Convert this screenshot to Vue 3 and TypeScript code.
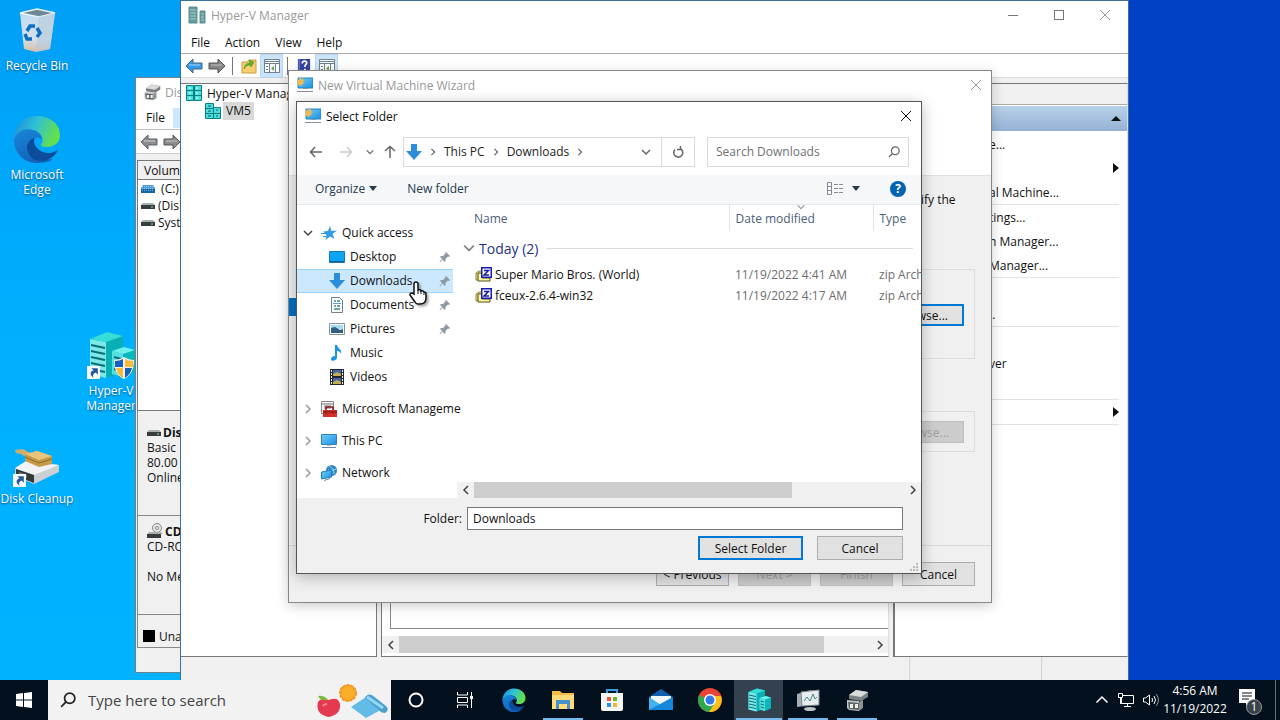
<script setup lang="ts">
import { ref } from 'vue'

interface TreeItem {
  label: string
  icon: string
  level: number
  chevron?: 'open' | 'closed'
  pinned?: boolean
  spaced?: boolean
}

const tree: TreeItem[] = [
  { label: 'Quick access', icon: 'star', level: 0, chevron: 'open' },
  { label: 'Desktop', icon: 'desktop', level: 1, pinned: true },
  { label: 'Downloads', icon: 'download', level: 1, pinned: true },
  { label: 'Documents', icon: 'document', level: 1, pinned: true },
  { label: 'Pictures', icon: 'picture', level: 1, pinned: true },
  { label: 'Music', icon: 'music', level: 1 },
  { label: 'Videos', icon: 'video', level: 1 },
  { label: 'Microsoft Manageme', icon: 'toolbox', level: 0, chevron: 'closed', spaced: true },
  { label: 'This PC', icon: 'pc', level: 0, chevron: 'closed', spaced: true },
  { label: 'Network', icon: 'network', level: 0, chevron: 'closed', spaced: true },
]

const files = [
  { name: 'Super Mario Bros. (World)', date: '11/19/2022 4:41 AM', type: 'zip Arch' },
  { name: 'fceux-2.6.4-win32', date: '11/19/2022 4:17 AM', type: 'zip Arch' },
]

const actions = [
  { label: 'e...', arrow: false, line: false },
  { label: '', arrow: true, line: false },
  { label: 'al Machine...', arrow: false, line: true },
  { label: 'tings...', arrow: false, line: false },
  { label: 'h Manager...', arrow: false, line: false },
  { label: 'Manager...', arrow: false, line: true },
  { label: '', arrow: false, line: false },
  { label: '..', arrow: false, line: true },
  { label: '', arrow: false, line: false },
  { label: 'ver', arrow: false, line: false },
  { label: '', arrow: false, line: true },
  { label: '', arrow: true, line: true },
]

const shortcuts = [
  { name: 'recycle', icon: 'recycle', lines: ['Recycle Bin'], link: false },
  { name: 'edge', icon: 'edge', lines: ['Microsoft', 'Edge'], link: false },
  { name: 'hyperv', icon: 'server-big', lines: ['Hyper-V', 'Manager'], link: true },
  { name: 'cleanup', icon: 'cleanup', lines: ['Disk Cleanup'], link: true },
]

const apps = [
  { icon: 'cortana', name: 'Cortana', state: '' },
  { icon: 'taskview', name: 'Task View', state: '' },
  { icon: 'edge', name: 'Microsoft Edge', state: '' },
  { icon: 'explorer', name: 'File Explorer', state: 'running' },
  { icon: 'store', name: 'Microsoft Store', state: '' },
  { icon: 'mail', name: 'Mail', state: '' },
  { icon: 'chrome', name: 'Google Chrome', state: '' },
  { icon: 'server-big', name: 'Hyper-V Manager', state: 'running active' },
  { icon: 'monitor', name: 'Performance Monitor', state: 'running' },
  { icon: 'diskapp', name: 'Disk Management', state: 'running' },
]

const selected = ref('Downloads')
const folder = ref('Downloads')
const query = ref('')
const search = ref('')
</script>

<template>
  <div class="screen">
    <svg class="defs" aria-hidden="true">
      <defs>
        <linearGradient id="g-edge" x1="0" y1="0" x2="1" y2="0.3">
          <stop offset="0" stop-color="#1789d8" /><stop offset=".5" stop-color="#2fc0d8" /><stop offset="1" stop-color="#62e04c" />
        </linearGradient>
        <linearGradient id="g-blue" x1="0" y1="0" x2="0.4" y2="1">
          <stop offset="0" stop-color="#1a86da" /><stop offset="1" stop-color="#1164b8" />
        </linearGradient>
        <linearGradient id="g-bin" x1="0" y1="0" x2="0" y2="1">
          <stop offset="0" stop-color="#bcdcf2" /><stop offset=".7" stop-color="#d5e0ea" /><stop offset="1" stop-color="#d8bda5" />
        </linearGradient>
        <linearGradient id="g-screen" x1="0" y1="0" x2="1" y2="1">
          <stop offset="0" stop-color="#6fd0fa" /><stop offset="1" stop-color="#1a8fdf" />
        </linearGradient>
        <symbol id="recycle" viewBox="0 0 48 48">
          <path d="M7 7l17-4 18 4-5 36-14 3-12-3z" fill="url(#g-bin)" />
          <path d="M7 7l17-4 18 4-16 4z" fill="#6c8798" stroke="#e7f2f8" stroke-width="1.5" />
          <path d="M26 11l16-4-5 36-14 3z" fill="#b6cadb" opacity=".6" />
          <path d="M14 25l3-5h5M24 22l3 5-3 4M19 33h-5l-2-5" fill="none" stroke="#0c6fc4" stroke-width="3.5" />
        </symbol>
        <symbol id="edge" viewBox="0 0 48 48">
          <path d="M1 25C1 10 11 1 24 1c14 0 23 9 23 19 0 8-6 12-13 12-5 0-7-1-6-3 2-2 2-4 1-7-3-9-18-11-28 3z" fill="url(#g-edge)" />
          <path d="M1 25C4 15 13 13 20 15c6 2 9 6 9 10-1-2-4-3-7-2-6 3-5 12 1 17 5 4 11 5 17 4-4 3-10 4-16 4C11 48 1 38 1 25z" fill="url(#g-blue)" />
          <path d="M22 23c-9 2-11 12-3 20 7 6 19 3 25-6 1-1 0-2-1-1-5 3-13 3-18-2-4-4-5-8-3-11z" fill="#0b4c9b" />
        </symbol>
        <symbol id="server-big" viewBox="0 0 48 48">
          <path d="M3 8l17-7 16 4v36l-17 6-16-4z" fill="#08b0b5" />
          <path d="M3 8l16 3v36L3 43z" fill="#7ce9e8" />
          <path d="M3 8l17-7 16 4-17 6z" fill="#35ded9" />
          <path d="M4 14l14 3M4 20l14 3M4 26l14 3M4 32l14 3M4 38l14 3" stroke="#0a6d78" stroke-width="2" />
          <path d="M25 20l12-4 11 3v22l-12 5-11-3z" fill="#0ab7bb" />
          <path d="M25 20l11 3v23l-11-3z" fill="#57dedf" />
          <path d="M25 20l12-4 11 3-12 4z" fill="#6bf0eb" />
          <path d="M27 26l7 2M27 32l7 2M27 38l7 2" stroke="#0a6d78" stroke-width="2" />
        </symbol>
        <symbol id="shield" viewBox="0 0 20 22">
          <path d="M10 0c3 2 7 3 10 3 0 9-3 16-10 19C3 19 0 12 0 3c3 0 7-1 10-3z" fill="#f2f2e8" />
          <path d="M9 2v8H1c0-2 0-4 0-6 3 0 6-1 8-2zM11 11h7c-1 4-3 7-7 10z" fill="#1560bd" />
          <path d="M11 2c2 1 5 2 8 2v6h-8zM2 11h7v10c-4-2-6-6-7-10z" fill="#f8b83c" />
        </symbol>
        <symbol id="cleanup" viewBox="0 -6 48 48">
          <path d="M2 24l11-7 33 3v7l-25 12-19-8z" fill="#c9cfd3" />
          <path d="M2 23l11-7 33 4-25 10z" fill="#f1f3f4" />
          <path d="M3 24l18 6v8L3 31z" fill="#34393c" />
          <path d="M6 27l8 3v3l-8-3z" fill="#6f767a" />
          <path d="M2 5l8-1 7 4-4 4-5-3-5-1z" fill="#cfae6c" />
          <path d="M12 9l12-3 15 5v8l-13 3-14-6z" fill="#c79a48" />
          <path d="M12 9l12-3 15 5-13 4z" fill="#e6c67c" />
          <path d="M12 12l14 6 13-4" stroke="#8d6b2d" fill="none" />
        </symbol>
        <symbol id="shortcut" viewBox="0 0 12 12">
          <path d="M0 0h12v12H0z" fill="#f7fbff" />
          <path d="M4 2h6v6L8 6c-2 1-3 2-2 5-4-3-3-6 0-7z" fill="#2b579a" />
        </symbol>
        <symbol id="servers" viewBox="0 0 18 18">
          <path d="M1 1h8v16H1z" fill="#639b9c" stroke="#5c8d90" />
          <path d="M12 5h5v12h-5z" fill="#639b9c" stroke="#5c8d90" />
          <path d="M2 4h6M2 7h6M2 10h6M2 13h6M13 8h3M13 11h3M13 14h3" stroke="#a9cccb" />
        </symbol>
        <symbol id="root" viewBox="0 0 16 16">
          <path d="M.5.500h7v15h-7zM8.500.500h7v15h-7z" fill="#4cdedb" stroke="#087f87" />
          <path d="M1 5.500h14M1 10.500h14" stroke="#087f87" />
          <path d="M3 3h2M10 3h2M3 8h2M10 8h2M3 13h2M10 13h2" stroke="#eaffff" />
        </symbol>
        <symbol id="vm" viewBox="0 0 16 16">
          <path d="M.5.500h8v15h-8zM8.500 4.500h7v11h-7z" fill="#4cdedb" stroke="#087f87" />
          <path d="M1 5.500h8M1 10.500h14" stroke="#087f87" />
          <path d="M3 3h3M3 8h3M3 13h3M11 7h2M11 13h2" stroke="#075f69" />
        </symbol>
        <symbol id="wizard" viewBox="0 0 16 16">
          <path d="M1 1h15v10H1z" fill="url(#g-screen)" stroke="#2384bd" />
          <path d="M3 0l1 2 2-1v2l2 1-2 1 1 2-2 0-1 2-2-1-2 0 1-3-1-2 2 0z" fill="#edb950" />
          <path d="M0 14.500h16" stroke="#85919a" /><path d="M6 11h5v1H6z" fill="#7f99a8" />
        </symbol>
        <symbol id="pc" viewBox="0 0 16 16">
          <path d="M.5 1.500h15v10H.5z" fill="url(#g-screen)" stroke="#2d84b7" />
          <path d="M1 14.500h14M6 12h4" stroke="#6a8797" />
        </symbol>
        <symbol id="star" viewBox="0 0 16 16">
          <path d="M9 1l1.500 5 5.500-.5-4.500 3.500 2 5-4.500-2.500L4.500 15l1-5L2 6.500l5-.5z" fill="#339be6" />
          <path d="M0 8.500h5M2 11.500h3" stroke="#339be6" />
        </symbol>
        <symbol id="desktop" viewBox="0 0 16 16"><path d="M.5 2.500h15v11H.5z" fill="#0ba5f3" stroke="#1478b8" /><path d="M1 12.500h14" stroke="#075d96" /></symbol>
        <symbol id="download" viewBox="0 0 16 16"><path d="M5 0h6v7h5l-8 9-8-9h5z" fill="#2c8ed8" /></symbol>
        <symbol id="document" viewBox="0 0 16 16">
          <path d="M2.500.5h8l3 3v12h-11z" fill="#fbfdff" stroke="#71828d" />
          <path d="M5 4h2M8 4h3M5 9h2M8 9h3M5 12h6" stroke="#3c8a85" stroke-width="1.500" /><path d="M4 6.500h8" stroke="#5aa2d0" />
        </symbol>
        <symbol id="picture" viewBox="0 0 16 16">
          <path d="M.5 2.500h15v11H.5z" fill="#fff" stroke="#83929e" /><path d="M2 4h12v4H2z" fill="#a6d8f2" /><path d="M2 7l4-1 5 3 3-1v4H2z" fill="#315e83" />
        </symbol>
        <symbol id="music" viewBox="0 0 16 16"><path d="M6 0h2c1 4 5 4 4 9-1-3-3-3-4-3v7c-1 3-6 4-6 1 0-2 2-3 4-3z" fill="#1696e8" /></symbol>
        <symbol id="video" viewBox="0 0 16 16">
          <path d="M1 0h14v16H1z" fill="#22262d" /><path d="M4 1h8v6H4zM4 9h8v6H4z" fill="#4566a5" /><path d="M4 5l4-2 4 2v2H4zM4 13l4-2 4 2v2H4z" fill="#c1ae50" />
          <path d="M2.500 1v14M13.500 1v14" stroke="#f5f5f5" stroke-dasharray="2 1" />
        </symbol>
        <symbol id="toolbox" viewBox="0 0 16 16">
          <path d="M.5.5h12v12H.5z" fill="#f8f8f8" stroke="#85888d" /><path d="M1 3h11M3 5h7M3 7h7" stroke="#74777c" />
          <path d="M5 9V6h7v3" fill="none" stroke="#7e1618" stroke-width="1.500" /><path d="M2 9h14v7H2z" fill="#d03028" /><path d="M2 11h14M5 10v3M12 10v3" stroke="#7b1715" />
        </symbol>
        <symbol id="network" viewBox="0 0 16 16">
          <circle cx="10.500" cy="5.500" r="5.500" fill="#2d86bd" /><path d="M8 1c4 2 5 5 5 8M7 5c3 1 6 0 8-1" stroke="#a2e0fb" fill="none" />
          <path d="M.5 7l10-2v7l-10 2z" fill="url(#g-screen)" stroke="#247eb1" /><path d="M3 15.500l6-2" stroke="#69889a" />
        </symbol>
        <symbol id="pin" viewBox="0 0 12 12"><path d="M7 1l4 4-1 1-1-.5-2.500 2.500v2L5.500 11 3.500 8.500 1 11.500.5 11 3 8 1 6l1-1h2L6.500 2.500 6 2z" fill="#8f9aa4" /></symbol>
        <symbol id="zip" viewBox="0 0 17 16">
          <path d="M1 13V6l3-2h3v9z" fill="#e9e478" stroke="#8a8640" /><path d="M3 14V6h4v5h8v3z" fill="#fbf7a0" stroke="#55511f" />
          <path d="M6.750.750h9.500v9.500h-9.500z" fill="#fff" stroke="#171bb0" stroke-width="1.500" /><path d="M9 3.500h4.500L9 8h5" fill="none" stroke="#171b9c" stroke-width="1.500" />
        </symbol>
        <symbol id="arrow-l" viewBox="0 0 18 16"><path d="M1 8l7-7v4h9v6H8v4z" fill="currentColor" stroke="#52636f" /><path d="M4 7h11" stroke="#fff" opacity=".3" stroke-width="2" /></symbol>
        <symbol id="arrow-r" viewBox="0 0 18 16"><path d="M17 8l-7-7v4H1v6h9v4z" fill="currentColor" stroke="#555" /><path d="M3 7h11" stroke="#fff" opacity=".25" stroke-width="2" /></symbol>
        <symbol id="folder-up" viewBox="0 0 16 16"><path d="M1 4h5l2-2h7v13H1z" fill="#f6ce70" stroke="#cf9c3d" /><path d="M3 11c1-5 3-6 6-6l-1-3 5 2-3 5-1-2c-3 0-4 1-6 4z" fill="#60b332" stroke="#3a8920" stroke-width=".5" /></symbol>
        <symbol id="panel" viewBox="0 0 16 16">
          <path d="M.5 1.500h15v13H.5z" fill="#f8fbfd" stroke="#71808c" /><path d="M1 3.500h14M1 5.500h14" stroke="#71808c" /><path d="M5.500 6v9M11.500 6v9M2 8.500h2M2 11.500h2" stroke="#71808c" /><path d="M10 8v5l-3-2.500z" fill="#61a73a" />
        </symbol>
        <symbol id="help-doc" viewBox="0 0 14 16"><path d="M0 0h14v16H0z" fill="#3346a4" /><path d="M1.500 0v16" stroke="#8592cf" /><path d="M5 5c0-4 6-3 5 0-1 2-2 1-2 4M8 11v2" fill="none" stroke="#fff" stroke-width="2" /></symbol>
        <symbol id="drive" viewBox="0 0 14 6"><path d="M2 0h10l2 2v4H0V2z" fill="#a7afae" /><path d="M0 2h14v4H0z" fill="#363d3f" /><path d="M10 4h2" stroke="#9be3ad" /></symbol>
        <symbol id="drive-blue" viewBox="0 0 14 8"><path d="M2 0h10l2 3v5H0V3z" fill="#4b9bd8" /><path d="M0 4h14v4H0z" fill="#1265a7" /><path d="M1 1.500h12M1 3.500h12M1 5.500h12" stroke="#fff" stroke-dasharray="1 1" opacity=".45" /></symbol>
        <symbol id="cd" viewBox="0 0 16 16"><circle cx="10" cy="5" r="4.500" fill="#e4e4e4" stroke="#8b8b8b" /><circle cx="10" cy="5" r="1.500" fill="#fff" stroke="#888" /><path d="M2 9h12l2 2H0z" fill="#a7afae" /><path d="M0 11h14v4H0z" fill="#363d3f" /></symbol>
        <symbol id="diskapp" viewBox="0 0 24 24">
          <path d="M4 7l7-5 12 2v5l-7 4-12-2z" fill="#7b8082" /><path d="M4 7l7-5 12 2-7 5z" fill="#d9dcdd" />
          <path d="M2 12l12 1v10l-10-1-2-2z" fill="#bfc3c4" /><path d="M3 14l11 1v7l-10-1z" fill="#5d6264" /><path d="M5 16h3v4H5zM10 16h3v4h-3z" fill="#f1f1f1" /><path d="M14 14l4-2v8l-4 3z" fill="#8d9294" />
        </symbol>
        <symbol id="cortana" viewBox="0 0 24 24"><circle cx="12" cy="12" r="6.500" fill="none" stroke="#fff" stroke-width="2" /></symbol>
        <symbol id="taskview" viewBox="0 0 24 24"><path d="M4.500 4v3h10V4M4.500 20v-3h10v3M4.500 9.500h10v5h-10zM18.500 4v16" fill="none" stroke="#fff" /><path d="M17 8h3v3h-3z" fill="#fff" /></symbol>
        <symbol id="explorer" viewBox="0 0 24 24"><path d="M1 3h8l2 2h12v16H1z" fill="#f4bd45" /><path d="M1 7h22v14H1z" fill="#ffdc78" /><path d="M5 12h14v9h-3v-5H8v5H5z" fill="#4493cf" /></symbol>
        <symbol id="store" viewBox="0 0 24 24"><path d="M7 6V2h10v4" fill="none" stroke="#38a1dd" stroke-width="2" /><path d="M1 5h22v16q0 2-2 2H3q-2 0-2-2z" fill="#f5f7f8" /><path d="M7 9h4v4H7z" fill="#f05434" /><path d="M13 9h4v4h-4z" fill="#75b42c" /><path d="M7 15h4v4H7z" fill="#2694dd" /><path d="M13 15h4v4h-4z" fill="#f5b52b" /></symbol>
        <symbol id="mail" viewBox="0 0 24 24"><path d="M0 9l12-8 12 8v13H0z" fill="#1060b1" /><path d="M2 8h20v8H2z" fill="#eef7fc" /><path d="M0 9l12 8-12 5z" fill="#41b2ee" /><path d="M24 9v13H0z" fill="#1688dc" /></symbol>
        <symbol id="chrome" viewBox="0 0 24 24"><circle cx="12" cy="12" r="12" fill="#eb4335" /><path d="M1 7c-3 9 2 16 10 17l6-9-5-3z" fill="#2fa94f" /><path d="M11 24c8 1 15-8 12-16H12l5 7z" fill="#fbc116" /><circle cx="12" cy="12" r="6" fill="#fff" /><circle cx="12" cy="12" r="4.500" fill="#3479e8" /></symbol>
        <symbol id="monitor" viewBox="0 0 24 24"><path d="M1 6l14-4v15L1 19z" fill="#a7adb0" /><path d="M5 4l18-2v15L6 18z" fill="#e7ecec" stroke="#7d898d" /><path d="M8 13l3-4 3 4 3-7 2 5 2-2" fill="none" stroke="#4d8588" /><ellipse cx="14" cy="21" rx="6" ry="2" fill="#bfc4c5" /></symbol>
        <symbol id="close" viewBox="0 0 12 12"><path d="M1 1l10 10M11 1L1 11" fill="none" stroke="currentColor" /></symbol>
        <symbol id="chev" viewBox="0 0 10 10"><path d="M1 3l4 4 4-4" fill="none" stroke="currentColor" stroke-width="1.500" /></symbol>
        <symbol id="chev-r" viewBox="0 0 10 10"><path d="M3 1l4 4-4 4" fill="none" stroke="currentColor" stroke-width="1.500" /></symbol>
        <symbol id="chev-l" viewBox="0 0 10 10"><path d="M7 1L3 5l4 4" fill="none" stroke="currentColor" stroke-width="1.500" /></symbol>
        <symbol id="back" viewBox="0 0 14 12"><path d="M13 6H2M6 1L1.500 6 6 11" fill="none" stroke="currentColor" stroke-width="1.500" /></symbol>
        <symbol id="lens" viewBox="0 0 14 14"><circle cx="8.500" cy="5.500" r="4.500" fill="none" stroke="currentColor" stroke-width="1.500" /><path d="M5.500 8.500L1 13" stroke="currentColor" stroke-width="1.500" /></symbol>
      </defs>
    </svg>

    <main class="desktop">
      <a v-for="s in shortcuts" :key="s.name" href="#" class="shortcut" :class="s.name">
        <span class="pic">
          <svg class="big"><use :href="'#' + s.icon" /></svg>
          <svg v-if="s.link" class="link"><use href="#shortcut" /></svg>
          <svg v-if="s.name === 'hyperv'" class="shield"><use href="#shield" /></svg>
        </span>
        <span v-for="l in s.lines" :key="l">{{ l }}</span>
      </a>

      <section class="win disk">
        <header class="disk-title"><svg class="i18"><use href="#diskapp" /></svg>Disk</header>
        <nav class="disk-menu"><button>File</button><span class="hot"></span></nav>
        <div class="disk-tools"><svg class="i18"><use href="#arrow-l" /></svg><svg class="i18"><use href="#arrow-r" /></svg></div>
        <div class="volumes">
          <div class="vol-head">Volume</div>
          <div class="vol"><svg class="tall"><use href="#drive-blue" /></svg><span>&nbsp;(C:)</span></div>
          <div class="vol"><svg><use href="#drive" /></svg><span>(Disk</span></div>
          <div class="vol"><svg><use href="#drive" /></svg><span>System</span></div>
        </div>
        <div class="unit first">
          <strong><svg class="drv"><use href="#drive" /></svg>Disk</strong>
          <span>Basic</span><span>80.00 G</span><span>Online</span>
        </div>
        <div class="unit second">
          <strong><svg class="i16"><use href="#cd" /></svg>CD-</strong>
          <span>CD-ROM</span><span>&nbsp;</span><span>No Media</span>
        </div>
        <div class="legend"><i></i>Unallocated</div>
      </section>

      <section class="win hyper">
        <header class="title dim"><svg class="i18"><use href="#servers" /></svg><span class="grow">Hyper-V Manager</span>
          <button class="cap" aria-label="Minimize"><i class="min"></i></button>
          <button class="cap" aria-label="Maximize"><i class="max"></i></button>
          <button class="cap" aria-label="Close"><svg class="i12"><use href="#close" /></svg></button>
        </header>
        <nav class="menu"><button>File</button><button>Action</button><button>View</button><button>Help</button></nav>
        <div class="tools">
          <button class="tool blue" aria-label="Back"><svg class="i18"><use href="#arrow-l" /></svg></button>
          <button class="tool" aria-label="Forward"><svg class="i18"><use href="#arrow-r" /></svg></button>
          <i class="sep"></i>
          <button class="tool" aria-label="Up"><svg class="i16"><use href="#folder-up" /></svg></button>
          <button class="tool on" aria-label="Console tree"><svg class="i16"><use href="#panel" /></svg></button>
          <i class="sep"></i>
          <button class="tool" aria-label="Help"><svg class="i14"><use href="#help-doc" /></svg></button>
          <button class="tool on" aria-label="Action pane"><svg class="i16"><use href="#panel" /></svg></button>
        </div>
        <div class="panes">
          <div class="pane left">
            <div class="node"><svg class="i16"><use href="#root" /></svg>Hyper-V Manager</div>
            <div class="node child"><svg class="i16"><use href="#vm" /></svg><span class="chosen">VM5</span></div>
          </div>
          <div class="pane center">
            <div class="sheet"></div>
            <div class="scroll">
              <button aria-label="Scroll left"><svg class="i10"><use href="#chev-l" /></svg></button>
              <span class="track"><i class="thumb wide"></i></span>
              <button aria-label="Scroll right"><svg class="i10"><use href="#chev-r" /></svg></button>
            </div>
          </div>
          <div class="pane right">
            <div class="pane-head"></div>
            <div class="pane-group"><i class="tri-up"></i></div>
            <button v-for="(a, i) in actions" :key="i" class="action" :class="{ line: a.line }">
              <span>{{ a.label }}</span><i v-if="a.arrow" class="tri-right"></i>
            </button>
          </div>
        </div>
        <footer class="status"><span class="grow"></span><span class="cell"></span><span class="cell small"></span></footer>
      </section>

      <section class="win wizard">
        <header class="title dim"><svg class="i16"><use href="#wizard" /></svg><span class="grow">New Virtual Machine Wizard</span>
          <button class="cap slim" aria-label="Close"><svg class="i12"><use href="#close" /></svg></button>
        </header>
        <div class="banner"></div>
        <div class="wiz-body">
          <i class="step"></i>
          <p class="hint">ify the</p>
          <div class="group one"><button class="btn focus">wse...</button></div>
          <div class="group two"><button class="btn off" disabled>wse...</button></div>
        </div>
        <footer class="wiz-foot">
          <button class="btn">&lt; Previous</button>
          <button class="btn off" disabled>Next &gt;</button>
          <button class="btn off" disabled>Finish</button>
          <button class="btn">Cancel</button>
        </footer>
      </section>

      <section class="win dialog">
        <header class="title"><svg class="i16"><use href="#wizard" /></svg><span class="grow">Select Folder</span>
          <button class="cap slim" aria-label="Close"><svg class="i12"><use href="#close" /></svg></button>
        </header>
        <div class="nav">
          <button class="go" aria-label="Back"><svg class="i14"><use href="#back" /></svg></button>
          <button class="go faint" aria-label="Forward"><svg class="i14 flip"><use href="#back" /></svg></button>
          <button class="go tiny" aria-label="Recent"><svg class="i8"><use href="#chev" /></svg></button>
          <button class="go" aria-label="Up"><svg class="i14 up"><use href="#back" /></svg></button>
          <div class="address">
            <svg class="i16"><use href="#download" /></svg>
            <svg class="i8"><use href="#chev-r" /></svg><a href="#">This PC</a>
            <svg class="i8"><use href="#chev-r" /></svg><a href="#">Downloads</a>
            <svg class="i8"><use href="#chev-r" /></svg>
            <span class="grow"></span>
            <button class="drop" aria-label="Previous locations"><svg class="i10"><use href="#chev" /></svg></button>
            <button class="reload" aria-label="Refresh">
              <svg class="i12" viewBox="0 0 12 12"><path d="M8 2.500A4.500 4.500 0 1 1 3 3.500M8.500 0v3.500H5" fill="none" stroke="#666" stroke-width="1.500" /></svg>
            </button>
          </div>
          <div class="find"><input v-model="query" type="text" aria-label="Search Downloads" placeholder="Search Downloads" /><svg class="i12"><use href="#lens" /></svg></div>
        </div>
        <div class="cmd">
          <button>Organize<i class="tri-down"></i></button>
          <button>New folder</button>
          <span class="grow"></span>
          <button aria-label="View"><svg class="view" viewBox="0 0 17 13"><path d="M.5.5h4v12h-4zM0 4.500h5M0 8.500h5M7 2.500h4M12 2.500h4M7 6.500h4M12 6.500h4M7 10.500h4M12 10.500h4" fill="none" stroke="#858b92" /></svg><i class="tri-down"></i></button>
          <button class="help" aria-label="Help">?</button>
        </div>
        <div class="browse">
          <nav class="tree">
            <button v-for="t in tree" :key="t.label" class="row" :class="{ sub: t.level === 1, spaced: t.spaced, sel: t.label === selected }" @click="selected = t.label">
              <svg v-if="t.chevron" class="i10 tw" :class="t.chevron"><use :href="t.chevron === 'open' ? '#chev' : '#chev-r'" /></svg>
              <svg class="i16"><use :href="'#' + t.icon" /></svg>
              <span class="name">{{ t.label }}</span>
              <svg v-if="t.pinned" class="i12 pin"><use href="#pin" /></svg>
            </button>
          </nav>
          <div class="list">
            <div class="clip">
              <table>
                <thead><tr><th class="c-name">Name</th><th class="c-date">Date modified<svg class="sort i8"><use href="#chev" /></svg></th><th class="c-type">Type</th></tr></thead>
                <tbody>
                  <tr class="today"><td colspan="3"><div class="today-in"><svg class="i12"><use href="#chev" /></svg><span>Today (2)</span><i></i></div></td></tr>
                  <tr v-for="f in files" :key="f.name" class="file">
                    <td><div class="fname"><svg class="zip"><use href="#zip" /></svg>{{ f.name }}</div></td><td>{{ f.date }}</td><td>{{ f.type }}</td>
                  </tr>
                </tbody>
              </table>
            </div>
            <div class="scroll">
              <button aria-label="Scroll left"><svg class="i10"><use href="#chev-l" /></svg></button>
              <span class="track"><i class="thumb"></i></span>
              <button aria-label="Scroll right"><svg class="i10"><use href="#chev-r" /></svg></button>
            </div>
          </div>
        </div>
        <footer class="dlg-foot">
          <div class="field"><label for="folder">Folder:</label><input id="folder" v-model="folder" type="text" /></div>
          <div class="choices"><button class="btn focus wide">Select Folder</button><button class="btn mid">Cancel</button></div>
          <svg class="grip" viewBox="0 0 8 8"><path d="M6 0h2v2H6zM3 3h2v2H3zM6 3h2v2H6zM0 6h2v2H0zM3 6h2v2H3zM6 6h2v2H6z" fill="#bbb" /></svg>
        </footer>
      </section>

      <svg class="pointer" viewBox="0 0 18 24"><path d="M5 13V3q0-2 2-2t2 2v6q3-1 3 1 2-1 3 1 2 0 2 2v4q0 6-6 6H9q-2 0-3-2l-5-7q0-2 2-2z" fill="#fff" stroke="#111" stroke-width="1.500" /><path d="M9 9v4M12 10v3M15 11v3" stroke="#111" /></svg>
    </main>

    <footer class="taskbar">
      <button class="start" aria-label="Start"><svg class="i16" viewBox="0 0 16 16"><path d="M0 2l7-1v6.500H0zM8 1l8-1v7.500H8zM0 8.500h7V15l-7-1zM8 8.500h8V16l-8-1z" fill="#fff" /></svg></button>
      <div class="search">
        <svg class="i16 glass"><use href="#lens" /></svg>
        <input v-model="search" type="text" aria-label="Type here to search" placeholder="Type here to search" />
        <svg class="treat" viewBox="0 0 72 36">
          <path d="M1 20q-3 12 10 15 13-2 12-13-2-8-11-4-8-3-11 2z" fill="#e53950" /><path d="M11 18q-4-5-10-4 2 5 10 4z" fill="#7cbb37" /><path d="M6 24q1-2 4-2" stroke="#ff8b94" stroke-width="2" fill="none" />
          <circle cx="31" cy="11" r="8" fill="#f28a1d" stroke="#f29a28" stroke-width="2" stroke-dasharray="3 1" /><circle cx="31" cy="11" r="7" fill="#fbae28" />
          <path d="M34 25l18-12 17 12-20 11z" fill="#62bce7" /><path d="M48 16q2-5 7-3l14 11q4 4-1 7-4 0-6-3z" fill="#4f9fcb" /><path d="M50 15l16 11" stroke="#93daf5" stroke-width="3" />
        </svg>
      </div>
      <button v-for="a in apps" :key="a.name" class="app" :class="a.state" :aria-label="a.name"><svg class="i24"><use :href="'#' + a.icon" /></svg></button>
      <span class="grow"></span>
      <div class="tray">
        <button aria-label="Hidden icons"><svg class="i14" viewBox="0 0 14 14"><path d="M1.500 9.500L7 4l5.500 5.500" fill="none" stroke="#fff" stroke-width="1.500" /></svg></button>
        <button aria-label="Network"><svg class="i16" viewBox="0 0 16 16"><path d="M5 3.500h10.500v8H3.500V6M9.500 12v3M6 14.500h7M.5 1.500h4v4h-4zM2.500 6v6" fill="none" stroke="#fff" /></svg></button>
        <button aria-label="Volume"><svg class="i16" viewBox="0 0 16 16"><path d="M.5 6h2l4-3v10l-4-3h-2zM9 6q1 2 0 4M11 4q3 4 0 8" fill="none" stroke="#fff" /><path d="M13 2q5 6 0 12" fill="none" stroke="#8a939a" /></svg></button>
      </div>
      <div class="clock"><span>4:56 AM</span><span>11/19/2022</span></div>
      <button class="notes" aria-label="Notifications"><svg viewBox="0 0 26 26"><path d="M2 2h16v14h-5l-4 4v-4H2z" fill="#fff" /><path d="M5 6h10M5 9h10M5 12h7" stroke="#06111f" /></svg><b>1</b></button>
      <i class="peek"></i>
    </footer>
  </div>
</template>

<style>
body { overflow: hidden; }
</style>

<style scoped>
* { box-sizing: border-box; }
.screen { display: flex; flex-direction: column; height: 100vh; font: 12px/15px "Open Sans", "Noto Sans", sans-serif; color: #111; overflow: hidden; }
.defs { position: absolute; width: 0; height: 0; }
.desktop { position: relative; flex: 1; overflow: hidden; background: linear-gradient(90deg, transparent 60%, #0041c5 88%), linear-gradient(#009ff5, #00b0ff 55%, #00b2ff); }
button { font: inherit; color: inherit; background: none; border: 0; padding: 0; margin: 0; white-space: nowrap; }
input { font: inherit; color: inherit; min-width: 0; }
a { color: inherit; text-decoration: none; }
svg { flex: none; display: block; }
.grow { flex: 1; }
.i8 { width: 8px; height: 8px; }
.i10 { width: 10px; height: 10px; }
.i12 { width: 12px; height: 12px; }
.i14 { width: 14px; height: 14px; }
.i16 { width: 16px; height: 16px; }
.i18 { width: 18px; height: 18px; }
.i24 { width: 24px; height: 24px; }

.shortcut { position: absolute; width: 76px; display: flex; flex-direction: column; align-items: center; color: #fff; text-shadow: 0 1px 2px #004a80; white-space: nowrap; }
.pic { position: relative; width: 48px; height: 48px; margin-bottom: 4px; }
.big { width: 48px; height: 48px; }
.link { position: absolute; left: 0; bottom: 0; width: 13px; height: 13px; }
.shield { position: absolute; right: 1px; bottom: 0; width: 20px; height: 22px; }
.recycle { left: -1px; top: 6px; }
.edge.shortcut { left: -1px; top: 115px; }
.hyperv { left: 73px; top: 331px; }
.cleanup { left: -1px; top: 439px; }

.win { position: absolute; display: flex; flex-direction: column; background: #fff; border: 1px solid #6f7f8b; overflow: hidden; }
.title { display: flex; align-items: center; flex: none; height: 30px; padding: 0 0 2px 8px; }
.title .grow { padding-left: 5px; }
.dim { color: #999; }
.cap { width: 46px; height: 28px; display: grid; place-items: center; }
.slim { width: 30px; }
.min { width: 10px; height: 1px; background: #777; }
.max { width: 10px; height: 10px; border: 1px solid #777; }

.disk { left: 135px; top: 77px; width: 420px; height: 596px; background: #f0f0f0; }
.disk-title { display: flex; align-items: center; gap: 4px; height: 28px; padding-left: 7px; color: #999; background: #fff; }
.disk-menu { display: flex; align-items: center; height: 24px; padding-left: 10px; gap: 8px; background: #fff; border-bottom: 1px solid #bbb; }
.hot { width: 40px; height: 20px; background: #cce8ff; }
.disk-tools { display: flex; align-items: center; gap: 5px; height: 24px; padding-left: 4px; background: #fff; border-bottom: 1px solid #ccc; }
.disk-tools svg { color: #8c8c8c; height: 16px; }
.volumes { height: 251px; margin: 6px 0 0 1px; background: #fff; border: 1px solid #777; }
.vol-head { height: 19px; padding: 2px 6px; background: #f0f0f0; border-bottom: 1px solid #777; }
.vol { display: flex; align-items: center; gap: 3px; height: 17px; padding-left: 3px; }
.vol svg { width: 14px; height: 6px; }
.vol .tall { height: 8px; }
.unit { display: flex; flex-direction: column; margin-left: 1px; padding-left: 9px; border: solid #888; border-width: 0 0 1px 1px; }
.unit strong { display: flex; align-items: center; gap: 2px; font-weight: 700; }
.first { height: 105px; padding-top: 14px; }
.second { height: 99px; padding-top: 7px; }
.drv { width: 14px; height: 6px; }
.legend { display: flex; align-items: center; gap: 4px; height: 33px; margin-left: 1px; padding: 10px 0 0 5px; border: solid #888; border-width: 0 0 1px 1px; }
.legend i { width: 12px; height: 12px; background: #000; }

.hyper { left: 180px; top: 0; width: 949px; height: 680px; background: #f0f0f0; border-color: #3c719a; border-bottom-width: 0; }
.hyper .title { background: #fff; padding-left: 7px; }
.menu { display: flex; align-items: center; flex: none; height: 23px; padding-left: 10px; gap: 15px; background: #fff; border-bottom: 1px solid #aaa; }
.tools { display: flex; align-items: center; flex: none; height: 24px; padding-left: 1px; background: #fff; border-bottom: 1px solid #ddd; }
.tool { width: 23px; height: 24px; display: grid; place-items: center; color: #858585; }
.tool .i18 { height: 16px; }
.tool.blue { color: #2f9be8; }
.on { background: #cce4f7; border: 1px solid #b3d6f2; }
.sep { width: 1px; height: 18px; margin: 0 4px; background: #777; }
.panes { flex: 1; display: flex; padding-top: 5px; gap: 4px; min-height: 0; }
.pane { background: #fff; border: 1px solid #777; min-width: 0; overflow: hidden; }
.left { width: 196px; padding: 0 0 0 5px; border-left: 0; }
.node { display: flex; align-items: center; gap: 5px; height: 18px; white-space: nowrap; }
.child { padding-left: 19px; gap: 2px; }
.chosen { padding: 1px 3px 2px; background: #d9d9d9; }
.center { flex: 1; display: flex; flex-direction: column; padding-bottom: 3px; border-right-color: #ddd; }
.sheet { flex: 1; margin-left: 8px; border: solid #888; border-width: 0 0 1px 1px; }
.scroll { display: flex; height: 16px; flex: none; background: #f1f1f1; }
.scroll button { width: 17px; display: grid; place-items: center; color: #444; }
.center .scroll { margin-top: 7px; height: 17px; }
.track { flex: 1; display: flex; }
.thumb { width: 74%; background: #cdcdcd; }
.wide.thumb { width: 90%; }
.right { width: 235px; border-width: 1px 1px 1px 2px; border-right-color: #ddd; }
.pane-head { height: 21px; background: #f0f0f0; border-bottom: 1px solid #aaa; }
.pane-group { display: flex; align-items: center; justify-content: flex-end; height: 25px; margin: 1px 0; padding-right: 6px; background: linear-gradient(#b9d1ea, #94b2d5); }
.tri-up { border: 5px solid transparent; border-top: 0; border-bottom-color: #111; }
.tri-right { border: 5px solid transparent; border-right: 0; border-left: 6px solid #111; }
.tri-down { border: 4px solid transparent; border-bottom: 0; border-top: 5px solid #26394e; }
.action { display: flex; align-items: center; justify-content: space-between; width: 224px; height: 24px; padding-left: 94px; }
.action.line { height: 25px; border-bottom: 1px solid #e2e2e2; }
.status { display: flex; flex: none; height: 23px; }
.cell { width: 132px; border-left: 1px solid #d5d5d5; }
.cell.small { width: 87px; }

.btn { height: 23px; padding: 0 7px; background: #e1e1e1; border: 1px solid #adadad; }
.focus { border: 2px solid #0078d7; }
.off { color: #a0a0a0; background: #ccc; border-color: #bfbfbf; }
.wizard { left: 288px; top: 70px; width: 704px; height: 533px; background: #f0f0f0; border-color: #888; box-shadow: 0 3px 12px #0003; }
.wizard .title { background: #fff; }
.banner { height: 75px; background: #fff; border-bottom: 1px solid #e2e2e2; flex: none; }
.wiz-body { position: relative; flex: 1; display: flex; flex-direction: column; align-items: flex-end; padding-right: 16px; border-bottom: 1px solid #d9d9d9; }
.step { position: absolute; left: 0; top: 122px; width: 160px; height: 18px; background: #0070c0; }
.hint { width: 54px; margin: 16px 0 62px; }
.group { width: 300px; display: flex; justify-content: flex-end; padding-right: 10px; border: 1px solid #dcdcdc; }
.group .btn { width: 74px; height: 22px; text-align: right; padding-right: 14px; }
.one { height: 90px; padding-top: 34px; margin-bottom: 52px; }
.two { height: 41px; padding-top: 9px; }
.wiz-foot { display: flex; justify-content: flex-end; gap: 9px; height: 56px; padding: 16px 16px 0; }
.wiz-foot .btn { width: 73px; height: 24px; padding: 0; }

.dialog { left: 296px; top: 101px; width: 626px; height: 473px; border-color: #555; box-shadow: 0 3px 14px #0004; }
.nav { display: flex; align-items: center; flex: none; height: 43px; padding: 0 12px 4px 11px; color: #666; }
.go { width: 16px; display: grid; place-items: center; margin-right: 14px; }
.go.faint { color: #ccc; margin-right: 12px; }
.go.tiny { width: 8px; margin-right: 8px; }
.go.tiny + .go { margin-right: 5px; }
.flip { transform: rotate(180deg); }
.up { transform: rotate(90deg); }
.address { flex: 1; display: flex; align-items: center; gap: 7px; height: 30px; margin-right: 12px; padding-left: 2px; border: 1px solid #d9d9d9; color: #666; }
.address a { color: #222; }
.drop { width: 16px; display: grid; place-items: center; }
.reload { width: 33px; height: 28px; display: grid; place-items: center; border-left: 1px solid #d9d9d9; }
.find { width: 202px; height: 30px; display: flex; align-items: center; padding: 0 8px; border: 1px solid #d9d9d9; }
.find input { flex: 1; border: 0; padding: 0; outline: 0; }
.find input::placeholder { color: #707070; opacity: 1; }
.cmd { display: flex; align-items: center; flex: none; height: 30px; padding: 0 15px 2px 18px; gap: 30px; color: #26394e; background: #f5f7f9; border-bottom: 1px solid #e5e9ec; }
.cmd button { display: flex; align-items: center; gap: 4px; }
.view { width: 17px; height: 13px; margin-right: 4px; }
.cmd .help { width: 16px; height: 16px; border-radius: 8px; justify-content: center; background: #0063b1; color: #fff; font-weight: 700; }
.browse { flex: 1; display: flex; min-height: 0; }
.tree { width: 156px; margin-right: 4px; padding-top: 16px; }
.row { display: flex; align-items: center; width: 100%; height: 24px; gap: 5px; padding: 0 2px 1px 6px; text-align: left; border: 1px solid transparent; border-width: 1px 0; }
.row.sub { padding-left: 32px; }
.row.spaced { margin-top: 8px; }
.row.sel { background: #cce8ff; border-color: #99d1ff; }
.tw { margin-right: 3px; color: #999; }
.tw.open { color: #444; }
.name { flex: 1; min-width: 0; }
.list { flex: 1; display: flex; flex-direction: column; min-width: 0; }
.clip { flex: 1; overflow: hidden; }
table { width: 100%; table-layout: fixed; border-collapse: collapse; color: #6d6d6d; }
th { position: relative; height: 26px; padding: 0 0 0 6px; font-weight: 400; text-align: left; color: #4c607a; border-right: 1px solid #e5e5e5; }
.c-name { width: 272px; padding-left: 17px; }
.c-date { width: 144px; }
th.c-type { border-right: 0; }
.sort { position: absolute; left: 67px; top: -2px; color: #999; }
td { padding: 0 0 0 6px; white-space: nowrap; }
.today td { padding: 5px 0 4px 6px; }
.today-in { display: flex; align-items: center; gap: 4px; width: 450px; height: 24px; font-size: 14px; color: #1e3287; }
.today-in svg { color: #888; }
.today-in i { flex: 1; height: 1px; margin-left: 4px; background: #dedede; }
.file td { height: 21px; }
.file td:first-child { padding-left: 18px; color: #111; }
.fname { display: flex; align-items: center; gap: 3px; }
.zip { width: 17px; height: 16px; }
.dlg-foot { position: relative; flex: none; height: 75px; padding: 9px 18px 0; background: #f0f0f0; }
.field { display: flex; align-items: center; justify-content: flex-end; gap: 5px; }
.field input { width: 436px; height: 23px; padding: 0 5px; border: 1px solid #777; background: #fff; }
.choices { display: flex; justify-content: flex-end; gap: 14px; margin-top: 6px; }
.choices .btn { height: 24px; }
.btn.wide { width: 105px; }
.btn.mid { width: 86px; }
.grip { position: absolute; right: 3px; bottom: 2px; width: 8px; height: 8px; }
.pointer { position: absolute; left: 409px; top: 281px; width: 18px; height: 24px; filter: drop-shadow(2px 2px 1px #0005); }

.taskbar { display: flex; flex: none; height: 40px; background: #03101d; color: #fff; }
.start { width: 48px; display: grid; place-items: center; }
.search { display: flex; align-items: center; width: 343px; padding-left: 12px; background: #f2f2f2; color: #333; }
.glass { color: #222; }
.search input { flex: 1; margin-left: 12px; padding: 0; border: 0; outline: 0; background: none; font-size: 15px; }
.search input::placeholder { color: #444; opacity: 1; }
.treat { width: 72px; height: 36px; margin-right: 2px; }
.app { width: 49px; display: grid; place-items: center; border-bottom: 2px solid transparent; border-top: 2px solid transparent; }
.running { background: linear-gradient(#76b9ed, #76b9ed) bottom / 40px 2px no-repeat border-box; }
.active { background: linear-gradient(#76b9ed, #76b9ed) bottom / 46px 2px no-repeat border-box, #33424e; }
.tray { display: flex; align-items: center; gap: 9px; }
.clock { display: flex; flex-direction: column; justify-content: center; align-items: center; width: 72px; line-height: 18px; }
.notes { position: relative; width: 44px; display: grid; align-items: center; padding-left: 6px; }
.notes svg { width: 26px; height: 26px; }
.notes b { position: absolute; right: 13px; bottom: 5px; width: 16px; height: 16px; border: 1px solid #999; border-radius: 8px; background: #39424b; font: 12px/14px "Open Sans", sans-serif; }
.peek { width: 5px; border-left: 1px solid #66717b; }
</style>
